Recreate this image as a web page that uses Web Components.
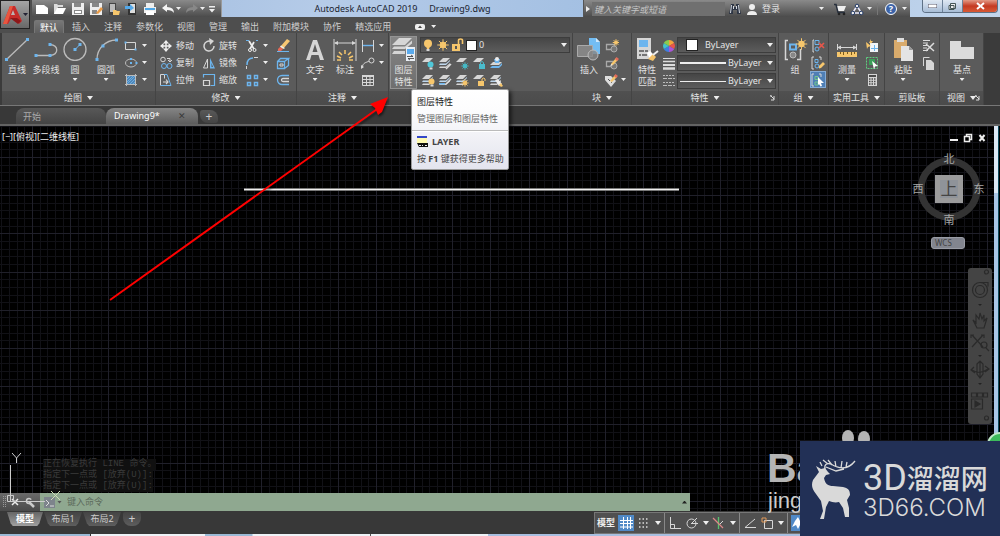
<!DOCTYPE html>
<html lang="zh-CN">
<head>
<meta charset="utf-8">
<title>Autodesk AutoCAD 2019 - Drawing9.dwg</title>
<style>
html,body{margin:0;height:100%}
body{background:#383838;font:9px/12px "Noto Sans","Noto Sans CJK SC",sans-serif;color:#e2e2e2;overflow:hidden}
</style>
</head>
<body>
<cad-app></cad-app>
<script>
const W='#d6d6d6',B='#6db5ee',Y='#f6c66c',G='#a9a9a9';
const dot=(x,y,s=3)=>`<rect x="${x-s/2}" y="${y-s/2}" width="${s}" height="${s}" fill="${B}"/>`;
const st=(d,c=W,w=1)=>`<path d="${d}" fill="none" stroke="${c}" stroke-width="${w}"/>`;
const fl=(d,c=W)=>`<path d="${d}" fill="${c}"/>`;
const stack=fl('M1 6L5 2h7L8 6z')+fl('M1 9l1-1.500h6L12 4v1L8 9z','#bfd8ee')+fl('M1 12l1-1.500h6L12 7v1.500L8 12z');
const sheet=fl('M1 6L5 2h7L8 6z');
const sun=(x,y,r,c=Y)=>{let d='';for(let i=0;i<8;i++){const a=i*Math.PI/4;d+=`M${x} ${y}L${x+Math.cos(a)*r*1.8} ${y+Math.sin(a)*r*1.8}`}return st(d,c,1)+`<circle cx="${x}" cy="${y}" r="${r}" fill="${c}"/>`};
const bulb=(x,y,c=Y)=>`<circle cx="${x}" cy="${y}" r="3" fill="${c}"/>`+fl(`M${x-1} ${y+3}h3v2h-3z`);
const block=st('M1.500 5.500h8v5h-8z',G,1.300)+`<circle cx="9" cy="10" r="3" fill="#777" stroke="${G}"/>`;
const pencil=fl('M6 8l5-6 2 2-5 5-2 .500z',Y)+fl('M6 8l-.500 2 2.500-1z','#e8e8e8')+fl('M10 3l1.500-2L14 3l-2 2z','#e36b5b');
const ICONS={
 line:[24,24,st('M1.500 22.500L22.500 2.500','#bbb',1.300)+dot(1.500,22.500)+dot(22.500,2.500)],
 pline:[24,24,st('M2 18.500h14c9-1 9-10 0-11','#bbb',1.300)+dot(2,18.500)+dot(16,18.500)+dot(16,7.500)],
 circle:[24,24,`<circle cx="12" cy="12.500" r="11" fill="none" stroke="#bbb" stroke-width="1.300"/>`+st('M12 12.500L17 7.500',B)+dot(12,12.500)+dot(17,7.500)],
 arc:[24,24,st('M3 22.500C3 12 11 3 22.500 3','#bbb',1.300)+dot(3,22.500)+dot(9,9)+dot(22.500,3)],
 rect:[16,16,st('M2.500 4.500h10v7h-10z')+dot(2.500,4.500,2)+dot(12.500,11.500,2)],
 ellipse:[16,16,`<ellipse cx="8" cy="8" rx="5.500" ry="4" fill="none" stroke="#bbb"/>`+dot(8,8,2)+dot(13.500,8,2)+dot(8,4,2)],
 hatch:[16,16,fl('M4 4h8v8H4z','#4f87b8')+st('M4 7l3-3M4 10l6-6M4 12l8-8M7 12l5-5M10 12l2-2','#79bdf3',.700)+st('M3.500 2v12M12.500 2v12M2 3.500h12M2 12.500h12','#bbb')],
 move:[16,16,st('M8 3v10M3 8h10','#eee',1.500)+fl('M8 2l3 3.500H5zM8 14l3-3.500H5zM2 8l3.500-3v6zM14 8l-3.500-3v6z','#eee')],
 copy:[16,16,`<circle cx="5" cy="4.500" r="2.300" fill="none" stroke="${W}"/><circle cx="6" cy="11" r="2.500" fill="none" stroke="${B}"/><circle cx="11.500" cy="11" r="2.500" fill="none" stroke="${B}"/>`+st('M9 3.500h3v3M10 5l2 2 2-2')],
 stretch:[16,16,st('M2.500 13.500v-11h4v4',W)+st('M6 2.500h3l4 11H2.500',B)+st('M5 10h5M8 7.500l2 2.500-2 2',W,1.200)],
 rotate:[16,16,st('M10 3.500A5 5 0 1 0 13 8',W,1.500)+fl('M8 0l5 3-4 4z')],
 mirror:[16,16,st('M6.500 4v9H2.500z',W)+fl('M9 3l5 10.500H9z',B)+fl('M10.500 8l1.500 4h-1.500z','#555')],
 scale:[16,16,st('M2.500 5.500v-3h11v11h-4',B,1.200)+st('M2.500 8.500h6v5h-6z',W,1.200)],
 trim:[16,16,st('M2 2.500h3M12 2.500h2',B)+st('M5 3l5 8M10 4L6 11','#eee',1.700)+`<circle cx="6" cy="12" r="1.500" fill="none" stroke="#eee"/><circle cx="10.500" cy="12" r="1.500" fill="none" stroke="#eee"/>`],
 fillet:[16,16,st('M3 10Q3 3 9 3',B,1.500)+st('M10 2.500h4M2.500 11v3')],
 array:[16,16,st('M3.500 3.500h3v3h-3zM10.500 3.500h3v3h-3zM3.500 10.500h3v3h-3z',B,1.500)+st('M10.500 10.500h3v3h-3z',B,1.500)],
 erase:[16,16,fl('M5 9l7-8 3 2-7 8z','#f7c873')+fl('M5 9l3 2-2 2H3v-2z','#e96855')+fl('M5 8.500l4 2.500.800-1L6 7.500z','#eee')+st('M2 13.500h12',B)],
 explode:[16,16,st('M2.500 6.500h7v7h-7zM2.500 6.500l3-3h8l-4 3M9.500 13.500l4-3v-7',B,1.300)+st('M5 9h3v2H5z',W)],
 offset:[16,16,st('M14 3.500H7a4.500 4.500 0 0 0 0 9h7',B,1.300)+st('M14 6.500H8a1.500 1.500 0 0 0 0 3h6',W,1.300)],
 text:[24,24,fl('M3 23L10 3h4l7 20h-4l-1.500-5H8.500L7 23zM9.500 15h5L12 7z')],
 dim:[24,24,st('M1 2v22M23 2v22M2 6h20',W)+fl('M1 6l4-2v4zM23 6l-4-2v4z')+st('M12 13v4M6 15l3 3M18 15l-3 3M4 19l4 2M20 19l-4 2M4 23h4M16 23h4',Y,1.500)],
 lin:[16,16,st('M2.500 2v12M13.500 2v12')+st('M3 7.500h10',B,1.400)],
 leader:[16,16,st('M2 13C3 7 6 8 9 6')+`<circle cx="11.500" cy="5.500" r="2.500" fill="none" stroke="${W}"/>`+fl('M1 14v-4l3 2z')],
 table:[16,16,st('M2.500 3.500h11v10h-11zM2.500 7.500h11M2.500 10.500h11M6.500 4v9M10 4v9')+fl('M2 3h12v2H2z')],
 layers:[26,26,fl('M1 8L8 1h13l-7 7z')+fl('M1 12l2-2.500h11l7-6v3L14 12z')+fl('M1 17l2-3h11v3z')+fl('M15 10h9v14h-9z','#e9eef4')+fl('M16 12h7v5h-7z','#5aabee')+st('M16 19.500h6M20 18l2 1.500M17 21.500h6M19 23l-2-1.500','#333',.800)],
 bulb:[16,16,`<circle cx="8" cy="6.500" r="4" fill="${Y}"/>`+fl('M6 9h4l-1 3H7z',Y)+fl('M6.500 12h3v2h-3z')],
 sun:[16,16,sun(8,8,3.200)],
 unlock:[16,16,fl('M2 7h8v7H2z',Y)+st('M8.500 7V3.500q0-1.500 2-1.500t2 1.500V7',Y,1.600)+fl('M5 9h2v3H5z','#555')],
 l1:[14,14,sheet+bulb(9.500,8.500,'#4fc7d8')], l2:[14,14,stack+st('M8 13l5-5','#ddd',1.500)],
 l3:[14,14,sheet+sun(10,10,2,'#45bcc8')], l4:[14,14,sheet+fl('M7 8h6v5H7z','#4bbccd')+st('M8.500 8V6.500q1.500-2 3 0V8','#4bbccd')],
 l5:[14,14,fl('M1 9l3-3h9l-3 3z')+fl('M1 12l2-2h7l3-3v2l-3 3z',B)+fl('M5 3h6l-1 4H6z',B)+`<circle cx="8" cy="3" r="2" fill="#eee"/>`],
 l6:[14,14,stack+bulb(10.500,8.500)], l7:[14,14,stack+st('M8 11l5-5','#ddd',1.500)+fl('M1 10h6v1.500H1z',B)],
 l8:[14,14,stack+sun(10,10,2)], l9:[14,14,sheet+fl('M6 8h6v5H6z',Y)+st('M10 8V6q2-2 3 0v2',Y)],
 l10:[14,14,stack+fl('M6 7l3-1 4 5-3 2z','#eee')+fl('M10 12l2-2 2 3-2 1z',Y)],
 insert:[26,24,fl('M13 1h7l4 4v12H13z','#73bdf3')+fl('M20 1l4 4h-4z','#cfe8fb')+`<path d="M1.500 8.500h15v11h-15z" fill="#858585" stroke="#aaa"/><circle cx="17" cy="18" r="5" fill="#868686" fill-opacity=".8" stroke="#bbb"/>`],
 b1:[14,14,block+sun(11,3.500,1.800)], b2:[14,14,block+pencil], b3:[14,14,fl('M1 3h6l5 5-5 6-6-7z','#ddd')+st('M4 6l4 4','#555')+pencil],
 match:[26,26,fl('M3 1h14v21H3z')+fl('M5 3h9v7H5z','#6db5ee')+st('M5 14h5M11 14h3M5 18h2M8 18h5','#555',1.500)+fl('M13 16l3-2 4 4-4 4z','#fff')+fl('M14 22l5-5 3 3-3 4z','#f3c26a')+st('M19 18l5-4','#eee',2)],
 wheel:[14,14,'<path d="M7 7V1a6 6 0 0 1 5.200 3z" fill="#f3a33c"/><path d="M7 7l5.200-3a6 6 0 0 1 0 6z" fill="#e8554b"/><path d="M7 7l5.200 3A6 6 0 0 1 7 13z" fill="#a855d8"/><path d="M7 7v6a6 6 0 0 1-5.200-3z" fill="#3f7ee0"/><path d="M7 7l-5.200 3a6 6 0 0 1 0-6z" fill="#42c3c9"/><path d="M7 7L1.800 4A6 6 0 0 1 7 1z" fill="#8acb4f"/>'],
 lw:[14,14,st('M1 2.500h12','#ddd')+st('M1 5.500h12','#ddd',1.500)+st('M1 9h12','#ddd',2)+st('M1 12.500h12','#ddd',2.500)],
 lt:[14,14,'<path d="M1 2.500h12M1 9.500h12" stroke="#bbb" stroke-dasharray="2 1"/><path d="M1 5.500h12M1 12.500h12" stroke="#bbb" stroke-dasharray="4 1"/>'],
 group:[26,24,st('M6 3.500H3.500v19H6M15 22.500h3.500V12',W,1.500)+st('M8 7.500h6v5H8z',B,2)+`<circle cx="11" cy="18" r="3" fill="#888" stroke="#bbb"/>`+sun(19.500,7,3.200)],
 g1:[14,14,st('M4 1.500h4v4H4z',B)+`<circle cx="6" cy="10" r="2" fill="none" stroke="${B}"/>`+st('M3 1H2v12h1',W)+st('M8 4l5 5M13 4L8 9','#e7574b',1.700)],
 g2:[14,14,st('M3 1H1v12h2M8 1h2v3',W)+st('M4 3.500h3v3H4z',B)+`<circle cx="6" cy="10" r="2" fill="none" stroke="${B}"/>`+fl('M8 10l4-4 2 2-4 4-2 .500z',Y)],
 g3:[14,14,st('M3 1H1v12h2M8 1h2v3',W)+st('M4 3.500h3v3H4zM4 9h3v3H4z','#72c78d')+fl('M7 4l6 6H10l1 3-1.500.500L8 11l-1 1z','#fff')],
 measure:[24,24,st('M2.500 7v6M21.500 7v6M3 10.500h18')+fl('M2 10.500l4-2v4zM22 10.500l-4-2v4z')+fl('M2 15h20v5H2z',Y)+st('M5.500 15v2M8.500 15v3M12.500 15v2M16.500 15v3M19.500 15v2','#7b5a1b')],
 u1:[14,14,fl('M5 4h8v9H5z','#f1f5f9')+st('M9.500 6v6M6 9.500h7',B)+fl('M1 3l5 4-3 1-1 2zM6 0L4 4h2L5 6l3-4H6z',Y)],
 u2:[14,14,'<path d="M1.500 1.500h11v11h-11z" fill="none" stroke="#5fce7f" stroke-dasharray="2 1"/>'+fl('M4 3h6v6H4z','#3c9f5a')+fl('M7 5l6 5-3 .500-1 3z','#fff')],
 calc:[14,14,fl('M3 1h9v12H3z')+fl('M4 2h7v2H4z','#4a4a4a')+'<path d="M4 6h7M4 8.500h7M4 11h7" stroke="#4a4a4a" stroke-width="1.500" stroke-dasharray="1.500 1"/>'],
 paste:[24,24,fl('M3 3h13v18H3z','#d9ab6c')+fl('M6 1h7v4H6z','#ddd')+fl('M10 9h8l4 4v11H10z','#e4e4e4')+fl('M18 9l4 4h-4z','#999')],
 cut:[14,14,st('M2 1.500h7M2 4h5M2 6.500h4M2 9h4M2 11.500h5','#ddd')+st('M5 5l8 7M13 4l-8 8','#ddd',1.500)],
 copyclip:[14,14,st('M2.500 10V1.500h6')+fl('M5 4h5l3 3v7H5z')],
 base:[24,24,fl('M0 4h11v6h13v12H0z','#dcdcdc')],
 new:[14,14,fl('M1 3h8l4 3v6H1z','#fff')], open:[14,14,fl('M1 2h3l1 1h5v2H5l-3 7H1z','#ddd')+fl('M4 6h9l-3 6H1z','#fff')],
 save:[14,14,fl('M1 1h12v12H1z','#eee')+fl('M3 1h7v4H3zM3 8h8v4H3z','#888')+fl('M4 9h6v2H4z','#fff')],
 saveas:[14,14,fl('M1 1h12v12H1z','#eee')+fl('M3 1h7v4H3zM3 8h5v4H3z','#888')+fl('M7 11l5-6 2 2-5 5z','#e99a45')],
 mob:[14,14,fl('M2 1h7v12H2z','#444')+fl('M3 2h5v8H3z','#bbb')+fl('M6 8h3l1 1h3l-1 4H6z',Y)], mob2:[14,14,fl('M3 1h8v12H3z','#333')+fl('M5 2h5v9H5z','#ddd')+fl('M0 4h5V2l4 4-4 3V7H0z','#54a9ea')],
 print:[14,14,fl('M3 1h8v4H3z','#eee')+fl('M1 5h12v6H1z','#eee')+fl('M2 6h10v2H2z','#4ea7e8')+fl('M3 9h8v4H3z','#fff')],
 undo:[14,14,fl('M1 6l5-4v3q7 0 7 6-2-3-7-3v2z','#f4f4f4')], redo:[14,14,fl('M13 6L8 2v3q-7 0-7 6 2-3 7-3v2z','#888')],
 custom:[14,14,fl('M4 4h6v1.500H4zM4 7h6l-3 3.500z','#eee')],
 find:[14,14,fl('M3 2h3v3h2V2h3l2 10H9V8H5v4H1z','#2e3645')+st('M3.500 3l-1 8M5.500 4v3M8.500 4v3M10.500 3l1 8','#d5dae2')], user:[14,14,`<circle cx="7" cy="5" r="3" fill="#eee"/>`+fl('M2 13q0-4 5-4t5 4z','#eee')],
 cart:[14,14,fl('M3 4h10l-2 5H5z','#eee')+st('M1 2.500h2l2 8h7','#28303d',1.500)+'<circle cx="6" cy="12" r="1.300" fill="#222"/><circle cx="11" cy="12" r="1.300" fill="#222"/>'],
 a360:[14,14,st('M7 4L2.500 11h9z','#eef',1.500)+'<circle cx="7" cy="4" r="1.800" fill="#eee" stroke="#233a66"/><circle cx="2.800" cy="11" r="1.800" fill="#eee" stroke="#233a66"/><circle cx="11.200" cy="11" r="1.800" fill="#eee" stroke="#233a66"/>'],
 logo:[24,22,fl('M1 20L8 2h5l7 15-3 3-2-5H9l-3 5z','#c52c2a')+fl('M8 2h3L5 20H1z','#e9563f')+fl('M9 11h4L11 6z','#bdb3b3')+fl('M8 14h7l4 3-3 3z','#8e1719')],
 pill:[14,14,'<rect x="2" y="4" width="10" height="6" rx="2" fill="#eee"/>'+fl('M5 8l2-2.500L9 8z','#444')],
 gridicon:[14,14,st('M4.500 1v12M8.500 1v12M11.500 1v12M1 4.500h13M1 7.500h13M1 11h13','#fff')],
 dots:[14,14,'<path d="M2 3h9M2 7h9M2 11h9" stroke="#ddd" stroke-width="1.500" stroke-dasharray="1.500 2"/>'],
 ortho:[14,14,st('M2.500 1v11.500H13M2.500 8.500h4v4')], polar:[14,14,`<circle cx="6.500" cy="7.500" r="4.500" fill="none" stroke="${W}"/>`+st('M6 7.500h7M7 7L12 2')],
 iso:[14,14,st('M6.500 1v12','#57c36d',1.300)+st('M1 2l10 10','#d88',1.300)+st('M11 5L8 8')], osnap:[14,14,st('M12 3L2 11.500h11')], sq:[14,14,st('M4.500 4.500h8v8h-8z')+st('M2 2h4v4H2z','#e09a5a')],
 star:[14,14,fl('M6 1l2 4 4 5-4-1-2 4-2-4-4 2 3-6z','#fff')]
};
const html=(s)=>{const t=document.createElement('template');t.innerHTML=s;return t};
function define(name,render,after){
 customElements.define(name,class extends HTMLElement{
  connectedCallback(){ if(this.shadowRoot)return; const r=this.attachShadow({mode:'open'}); r.append(html('<style>*{box-sizing:border-box}button{all:unset;box-sizing:border-box;cursor:default}</style>'+render(this)).content.cloneNode(true)); after&&after(r,this);}
 });
}
define('cad-icon',el=>{const [w,h,s]=ICONS[el.getAttribute('name')];return `<style>:host{display:block;flex:none;width:${w}px;height:${h}px}svg{display:block}</style><svg width="${w}" height="${h}" viewBox="0 0 ${w} ${h}" aria-hidden="true">${s}</svg>`});
define('cad-arrow',()=>`<style>:host{display:block;flex:none;width:5px;height:3px;background:#eee;clip-path:polygon(0 0,100% 0,50% 100%)}</style>`);
define('cad-tool',el=>`<style>:host{display:block;height:17px}button{display:flex;align-items:center;justify-content:flex-start;height:17px;white-space:nowrap;min-width:16px}cad-icon{margin:0 auto}span{margin-left:2px}cad-arrow{margin-left:3px}
:host([on]) button{background:#4f7fb5;box-shadow:inset 0 0 0 1px #84abd6}</style>
<button aria-label="${el.getAttribute('label')||el.getAttribute('icon')}"><cad-icon name="${el.getAttribute('icon')}"></cad-icon>${el.hasAttribute('label')?`<span>${el.getAttribute('label')}</span>`:''}${el.hasAttribute('drop')?'<cad-arrow></cad-arrow>':''}</button>`);
define('cad-big',el=>`<style>:host{display:block;width:30px;flex:none}button{display:flex;flex-direction:column;align-items:center;width:100%;height:53px;padding-top:1px;text-align:center}.ic{height:27px}span{display:block;white-space:nowrap}cad-arrow{margin-top:2px}
:host([on]) button{background:linear-gradient(#868686,#6e6e6e);box-shadow:inset 0 0 0 1px #949494}</style>
<button><div class="ic"><cad-icon name="${el.getAttribute('icon')}"></cad-icon></div><span><slot></slot></span>${el.hasAttribute('drop')?'<cad-arrow></cad-arrow>':''}</button>`);
define('cad-panel',el=>`<style>:host{display:flex;flex-direction:column;flex:none;position:relative;height:72px;border-right:1px solid #444;background:#5b5b5b}
.body{flex:1;display:flex;padding:3px 0 0 1px}.cap{height:14px;background:linear-gradient(#505050,#4b4b4b);display:flex;align-items:center;justify-content:center;gap:5px;position:relative}
cad-arrow{width:6px;height:4px}.l{position:absolute;right:3px;top:4px}</style>
<div class="body"><slot></slot></div><div class="cap"><span>${el.getAttribute('caption')}</span>${el.hasAttribute('plain')?'':'<cad-arrow></cad-arrow>'}${el.hasAttribute('launch')?'<svg class="l" width="5" height="6" aria-hidden="true"><path d="M0 0h2M0 0v2M1 1l3 3M4 1v4H1" stroke="#ddd" fill="none"/></svg>':''}</div>`);
define('cad-combo',el=>`<style>:host{display:flex;align-items:center;height:16px;position:relative;background:linear-gradient(#464646,#5c5c5c);border:1px solid #3d3d3d;min-width:0}
select{appearance:none;flex:1;min-width:0;height:14px;border:0;padding:0 0 0 2px;margin:0;background:none;color:#e6e6e6;font:inherit;line-height:12px;outline:0}cad-arrow{margin-right:2px;width:6px;height:4px}</style>
<slot></slot><select aria-label="${el.getAttribute('label')}"><option>${el.getAttribute('value')}</option></select><cad-arrow></cad-arrow>`);
define('cad-tooltip',()=>`<style>:host{display:block;width:98px;height:81px;background:linear-gradient(#fff 0,#fcfcfd 20px,#f4f4f8 40px,#e3e4ee);border:1px solid #999;border-radius:2px;box-shadow:2px 2px 4px #000a;color:#666;white-space:nowrap}
p{margin:0;padding:0 0 0 5px;line-height:17px}.name{color:#222;padding-top:3px}hr{margin:3px 0 1px;border:0;border-top:1px solid #bbb;border-bottom:1px solid #fff}
.c{display:flex;align-items:center;gap:4px}b{color:#444}.h{color:#444}</style>
<p class="name">图层特性</p><p>管理图层和图层特性</p><hr><p class="c"><svg width="11" height="12" aria-hidden="true"><path d="M0 0h10v8H0z" fill="#fffbb0"/><path d="M0 0h10v2H0z" fill="#3448c8"/><path d="M0 7h11v4H2z" fill="#111"/><path d="M2 9.500h2M5 9.500h1M8 9.500h2" stroke="#eee"/></svg><b>LAYER</b></p><p class="h">按 <b>F1</b> 键获得更多帮助</p>`);
define('cad-titlebar',()=>`<style>:host{display:flex;height:17px;background:linear-gradient(100deg,#9bb8dc,#b5cbe8 30%,#a2bfe2 60%,#c3d6ec)}
.g{background:linear-gradient(#8a8a8a,#4b4b4b);display:flex;align-items:center}.q{width:190px;padding-left:3px;gap:4px;border-right:1px solid #999;flex:none}.q cad-arrow{margin:0 0 0 -3px}
h1{margin:0;font:inherit;color:#1c2430;flex:1;text-align:center;line-height:18px;white-space:pre}
.t{width:9px;justify-content:center;border-left:1px solid #555}.t i{border:3px solid transparent;border-left:4px solid #eee;border-right:0}
.s{width:318px;gap:3px;padding-right:3px}input{width:133px;height:14px;border:0;margin:1px 0 0;padding:0 2px;background:#707070;font:italic 9px/12px "Noto Sans","Noto Sans CJK SC",sans-serif;color:#ddd;border-radius:0}input::placeholder{color:#c4c4c4}
.login{display:flex;align-items:center;flex:1;justify-content:space-between;margin-right:6px}.sep{width:1px;height:12px;background:#777;margin:0 2px}
.help{width:12px;height:12px;border-radius:50%;border:1px solid #fff;background:#3d64a8;color:#fff;font-weight:bold;line-height:10px;text-align:center;margin:0 2px}
.w{width:90px;display:flex;justify-content:flex-end;padding-right:2px}.w div{display:flex;height:13px;border:1px solid #5e7186;border-top:0;border-radius:0 0 4px 4px;overflow:hidden}.w button{width:20px;height:12px;display:grid;place-items:center;background:linear-gradient(#dfe8f3,#a8bdd6);border-right:1px solid #6d8198}.w .x{width:34px;background:linear-gradient(#e39a86,#c43a22 50%,#d85a36);border:0}</style>
<div class="g q">${['new','open','save','saveas','mob','mob2','print','undo'].map(n=>`<cad-icon name="${n}"></cad-icon>`).join('')}<cad-arrow></cad-arrow><cad-icon name="redo"></cad-icon><cad-arrow></cad-arrow><cad-icon name="custom" style="margin-left:-4px"></cad-icon></div>
<h1>Autodesk AutoCAD 2019     Drawing9.dwg</h1>
<div class="g t"><i></i></div><div class="g s"><input aria-label="搜索" placeholder="键入关键字或短语"><cad-icon name="find"></cad-icon><cad-icon name="user"></cad-icon><div class="login"><span>登录</span><cad-arrow></cad-arrow></div><cad-icon name="cart"></cad-icon><cad-icon name="a360"></cad-icon><cad-arrow></cad-arrow><span class="sep"></span><span class="help">?</span><cad-arrow></cad-arrow></div>
<div class="w"><div><button aria-label="最小化"><svg width="9" height="4"><path d="M0 0h9v4H0z" fill="#fff" stroke="#556"/></svg></button><button aria-label="还原"><svg width="9" height="9"><path d="M2.500 1.500h5v5h-5zM1 3.500h5v4H1z" fill="#eee" stroke="#455"/></svg></button><button class="x" aria-label="关闭"><svg width="9" height="8"><path d="M1 1l7 6M8 1L1 7" stroke="#fff" stroke-width="2"/></svg></button></div></div>`);
define('cad-tabs',()=>`<style>:host{display:flex;align-items:flex-end;height:16px;background:#4e4e4e;padding-left:2px}nav{display:flex;gap:14px;align-items:end}
button{height:13px;line-height:13px;color:#cfcfcf;white-space:nowrap}.on{width:30px;text-align:center;background:linear-gradient(#777,#5f5f5f);color:#fff;border:1px solid #777;border-bottom:0;border-radius:2px 2px 0 0;margin-right:-6px}.p{display:flex;align-items:center;gap:4px;margin-left:22px}</style>
<nav><button class="on">默认</button>${['插入','注释','参数化','视图','管理','输出','附加模块','协作','精选应用'].map(n=>`<button>${n}</button>`).join('')}</nav><button class="p" aria-label="最小化功能区"><cad-icon name="pill"></cad-icon><cad-arrow></cad-arrow></button>`);
const tools=(...a)=>a.map(s=>{const [i,l,d]=s.split('|');return `<cad-tool icon="${i}"${l?` label="${l}"`:''}${d?' drop':''}></cad-tool>`}).join('');
define('cad-ribbon',()=>`<style>:host{display:flex;height:73px;background:#3b3b3b;padding-left:2px;border-bottom:1px solid #777}.col{padding-top:1px;flex:none}
.mod{display:flex;gap:7px;padding-left:1px}.lay{flex:1;margin:1px 2px 0 3px}.lay .r{display:flex}.lay cad-tool{width:17px}.lay cad-combo{margin-bottom:1px}.lay cad-combo cad-icon{margin-left:-1px}
.props{flex:1;display:grid;grid-template-rows:repeat(3,17px);row-gap:1px;margin:1px 2px 0 0}.props cad-combo{height:16px}.sw{display:block;width:11px;height:11px;background:#fff;border:1px solid #222;margin:0}.big{width:12px;height:12px;margin:0 5px 0 8px}.ln{display:block;width:46px;margin:0 0 0 2px;border-top:1px solid #eee}.ln.b{border-top-width:2px}
cad-tooltip{position:absolute;left:22px;top:56px;z-index:5}</style>
<cad-panel caption="绘图" style="width:154px"><cad-big icon="line" style="width:28px">直线</cad-big><cad-big icon="pline">多段线</cad-big><cad-big icon="circle" drop style="width:28px">圆</cad-big><cad-big icon="arc" drop style="width:34px">圆弧</cad-big><div class="col">${tools('rect||1','ellipse||1','hatch||1')}</div></cad-panel>
<cad-panel caption="修改" style="width:141px"><div class="mod"><div class="col">${tools('move|移动','copy|复制','stretch|拉伸')}</div><div class="col">${tools('rotate|旋转','mirror|镜像','scale|缩放')}</div><div class="col">${tools('trim||1','fillet||1','array||1')}</div><div class="col">${tools('erase','explode','offset')}</div></div></cad-panel>
<cad-panel caption="注释" style="width:92px"><cad-big icon="text" drop style="margin-left:2px">文字</cad-big><cad-big icon="dim">标注</cad-big><div class="col">${tools('lin||1','leader||1','table')}</div></cad-panel>
<cad-panel caption="" plain style="width:184px;z-index:4"><cad-big icon="layers" on style="width:27px">图层<br>特性</cad-big><div class="lay"><cad-combo label="图层" value="0"><cad-icon name="bulb"></cad-icon><cad-icon name="sun"></cad-icon><cad-icon name="unlock"></cad-icon><span class="sw"></span></cad-combo><div class="r">${tools('l1','l2','l3','l4','l5')}</div><div class="r">${tools('l6','l7','l8','l9','l10')}</div></div><cad-tooltip></cad-tooltip></cad-panel>
<cad-panel caption="块" style="width:59px"><cad-big icon="insert">插入</cad-big><div class="col">${tools('b1','b2','b3||1')}</div></cad-panel>
<cad-panel caption="特性" launch style="width:147px"><cad-big icon="match" style="width:28px">特性<br>匹配</cad-big><div class="col">${tools('wheel','lw','lt')}</div><div class="props"><cad-combo label="颜色" value="ByLayer"><span class="sw big"></span></cad-combo><cad-combo label="线宽" value="ByLayer"><span class="ln b"></span></cad-combo><cad-combo label="线型" value="ByLayer"><span class="ln"></span></cad-combo></div></cad-panel>
<cad-panel caption="组" style="width:50px"><cad-big icon="group">组</cad-big><div class="col">${tools('g1','g2')}<cad-tool icon="g3" on></cad-tool></div></cad-panel>
<cad-panel caption="实用工具" style="width:56px"><cad-big icon="measure" drop style="margin-left:2px">测量</cad-big><div class="col" style="margin-left:2px">${tools('u1','u2','calc')}</div></cad-panel>
<cad-panel caption="剪贴板" plain style="width:55px"><cad-big icon="paste" drop style="width:34px">粘贴</cad-big><div class="col">${tools('cut','copyclip')}</div></cad-panel>
<cad-panel caption="视图" launch style="width:44px"><cad-big icon="base" drop style="width:42px">基点</cad-big></cad-panel>`);
define('cad-files',()=>`<style>:host{display:flex;align-items:flex-end;height:20px;background:#383838;border-bottom:2px solid #636363;padding-left:16px}
button{height:16px;line-height:15px;padding-left:7px;border-radius:8px 8px 0 0;background:linear-gradient(#585858,#444);color:#aaa;width:90px}.on{width:92px;padding-left:8px;background:linear-gradient(#858585,#5c5c5c);color:#fff;display:flex;justify-content:space-between;padding-right:12px}.n{width:18px;height:13px;line-height:13px;margin:0 0 1px 2px;padding:0;text-align:center;font-size:12px;border-radius:3px 8px 3px 8px;color:#ccc}small{font-size:9px;color:#3a3a3a}</style>
<button>开始</button><button class="on">Drawing9*<small>✕</small></button><button class="n" aria-label="新图形">+</button>`);
define('cad-compass',()=>`<style>:host{display:block;width:76px;height:76px;color:#aaa}text{font:11px "Noto Sans CJK SC",sans-serif;fill:#a6a6a6;text-anchor:middle}.u{font-size:17px;fill:#444}</style>
<svg width="76" height="76"><circle cx="38" cy="38" r="28" fill="none" stroke="#333" stroke-width="7"/><path d="M24 24h28v28H24z" fill="#9b9b9b"/><path d="M29 29h18v18H29z" fill="#8f9399"/><text x="38" y="12">北</text><text x="38" y="73">南</text><text x="7" y="42">西</text><text x="68" y="42">东</text><text class="u" x="38" y="44">上</text></svg>`);
define('cad-nav',()=>`<style>:host{display:block;width:24px;height:156px;border-radius:3px;background:#444}</style>
<svg width="24" height="156" fill="none" stroke="#2a2a2a" stroke-width="1.200"><circle cx="18.500" cy="4" r="2"/><circle cx="18.500" cy="150" r="2"/><circle cx="12" cy="22" r="4.500"/><circle cx="12" cy="22" r="7.500"/><path d="M12 14.500h8v4"/><path d="M5 52l4 8h7l3-10-3 3 0-6-2 4-2-6-1 6-3-4v8z"/><path d="M4 67l11 12M15 67L4 79M3 70v-3h3M13 67h3v3"/><circle cx="16" cy="77" r="3"/><path d="M18 80l3 3M12 93v17M9 96l3-3 3 3v10l-3 4-3-4zM4 102q8 5 16-1M6 99l-3 3 4 3M17 98l4 3-4 3M3.500 125h5v4h-5zM9.500 125h5v4h-5zM15.500 125h4v4h-4zM3.500 131h11v10h-11z"/><path d="M7 133l5 3-5 3z" fill="#2a2a2a"/><path d="M10 36h4l-2 2zM10 87h4l-2 2zM10 115h4l-2 2z" fill="#222" stroke="none"/></svg>`);
define('cad-grid',()=>`<style>:host{display:block;position:absolute;inset:0;overflow:hidden}svg{display:block;width:100%;height:100%}</style><svg aria-hidden="true"><path class="a" stroke="#111116" fill="none"/><path class="b" stroke="#20202a" fill="none"/></svg>`,r=>{
 const draw=()=>{let a='',b='';const n=Math.ceil(Math.max(innerWidth,innerHeight)/7);for(let k=-5;k<n;k++){const x=Math.round(32+k*7.64)+.5,y=Math.round(31+k*7.64)+.5,s=`M${x} 0V4000M0 ${y}H6000`;k%5?a+=s:b+=s}r.querySelector('.a').setAttribute('d',a);r.querySelector('.b').setAttribute('d',b)};draw();addEventListener('resize',draw)});
define('cad-drawing',()=>`<style>:host{display:flex;flex-direction:column;justify-content:flex-end;flex:1;position:relative;background:#000;min-height:0;overflow:hidden}
.view{position:absolute;left:2px;top:5px;line-height:12px;color:#eee}.seg{position:absolute;left:244px;top:62px;width:435px;height:3px;background:linear-gradient(#777 1px,#eee 1px 2px,#777 2px)}
.wc{position:absolute;right:13px;top:7px}cad-compass{position:absolute;right:13px;top:25px}.wcs{position:absolute;right:35px;top:111px;width:34px;height:12px;border-radius:3px;background:#82858f;border:1px solid #9a9da6;color:#444;font-size:8px;line-height:10px;padding-left:3px}
cad-nav{position:absolute;right:8px;top:142px}.edge{position:absolute;right:0;top:0;bottom:0;width:6px;background:linear-gradient(90deg,#a9c6e6 4px,#0c4a5c 4px 5px,#000 5px)}.edge i{display:block;width:4px;height:67px;background:#dbe8f5}
.ball{position:absolute;right:-13px;top:306px;width:26px;height:26px;border-radius:50%;background:#3dbb5c;border:2px solid #bfe8c8}
.ucs{position:absolute;left:0;bottom:0;z-index:2}.hist{position:relative;margin:0 0 1px 43px;font:9px/12px "Liberation Mono","Noto Sans CJK SC",monospace;color:#3a3a3a}.hist span{display:table;background:#101010;white-space:pre;height:11px;line-height:11px}
.cmd{position:relative;display:flex;height:18px;width:69%;background:#8fa890;align-items:center}.h{width:40px;height:18px;background:linear-gradient(#6a6a6a,#4a4a4a)}input{flex:1;border:0;background:none;font:9px/12px "Noto Sans CJK SC",sans-serif;color:#333;padding:0 0 0 5px;outline:0}input::placeholder{color:#5c6b5c}.up{width:5px;height:3px;background:#222;clip-path:polygon(50% 0,100% 100%,0 100%);margin-right:3px}.pr{margin-left:4px}.cmd cad-arrow{background:#555;margin:0 0 0 2px}</style>
<cad-grid></cad-grid><div class="view">[−][俯视][二维线框]</div><div class="seg"></div>
<svg class="wc" width="38" height="12" fill="none" stroke="#eee" stroke-width="1.500"><path d="M1 7h8" stroke-width="2"/><path d="M17.500 3V1.500h5v5H21M15.500 3.500h5v5h-5z"/><path d="M30.500 2l5 6M35.500 2l-5 6" stroke-width="2"/></svg>
<cad-compass></cad-compass><div class="wcs">WCS</div><cad-nav></cad-nav><div class="edge"><i></i></div><div class="ball"></div>
<div class="hist"><span>正在恢复执行 LINE 命令。</span><span>指定下一点或 [放弃(U)]:</span><span>指定下一点或 [放弃(U)]:</span></div>
<div class="cmd"><div class="h"><svg width="40" height="18"><path d="M3.500 3v12M5.500 3v12" stroke="#999" stroke-dasharray="1 1"/><path d="M12 6l6 6M18 6l-6 6" stroke="#eee" stroke-width="1.500"/><path d="M29 9l5 5" stroke="#ccc" stroke-width="2.500"/><circle cx="29" cy="8" r="2.500" fill="none" stroke="#ccc" stroke-width="1.500" stroke-dasharray="12 4" stroke-dashoffset="-2"/></svg></div><svg class="pr" width="11" height="11"><path d="M0 0h11v11H0z" fill="#7d848c"/><path d="M2 3l3 3-3 3M6 9h4" stroke="#ddd" fill="none"/></svg><cad-arrow></cad-arrow><input aria-label="命令行" placeholder="键入命令"><div class="up"></div></div>
<svg class="ucs" width="66" height="62" fill="none" stroke="#ccc" aria-hidden="true"><path d="M10.500 16v36M7.500 46.500h6v6h-6zM12 52.500h33M12 4l4.500 5L21 4M16.500 9v5"/><path d="M51 42l9 9M60 42l-9 9" stroke="#cfe0b8"/></svg>`);
define('cad-footer',()=>`<style>:host{display:flex;justify-content:space-between;height:23px;background:#383838;flex:none}
.t{display:flex;padding:1px 0 0 7px;gap:1px}.t button{height:14px;line-height:14px;width:38px;text-align:center;background:linear-gradient(#444,#5d5d5d);color:#ccc;clip-path:polygon(0 0,100% 0,90% 80%,84% 100%,16% 100%,10% 80%)}.t .on{background:linear-gradient(#666,#a0a0a0);color:#fff;font-weight:bold;width:36px}.t .n{width:18px;font-size:12px;clip-path:none;border-radius:2px 2px 8px 8px;margin-left:1px}
.s{display:flex;align-items:center;height:22px;width:406px;margin-top:1px;background:#505050;border:1px solid #777;padding-left:2px;flex:none;gap:3px;overflow:hidden}.s>*{flex:none}.s b{font-weight:bold;color:#eee}.g{background:#5089c6;width:16px;height:16px;display:grid;place-items:center}.s cad-arrow{margin-left:1px;width:6px;height:4px}.v{width:1px;height:20px;background:#888}</style>
<div class="t"><button class="on">模型</button><button>布局1</button><button>布局2</button><button class="n" aria-label="新建布局">+</button></div>
<div class="s"><b>模型</b><button class="g" aria-label="栅格"><cad-icon name="gridicon"></cad-icon></button><cad-icon name="dots"></cad-icon><cad-arrow></cad-arrow><i class="v"></i><cad-icon name="ortho"></cad-icon><cad-icon name="polar"></cad-icon><cad-arrow></cad-arrow><cad-icon name="iso"></cad-icon><cad-arrow></cad-arrow><i class="v"></i><cad-icon name="osnap"></cad-icon><cad-icon name="sq"></cad-icon><cad-arrow></cad-arrow><i class="v"></i><button class="g" aria-label="注释可见性"><cad-icon name="star"></cad-icon></button></div>`);
define('cad-watermark',()=>`<style>:host{display:block;position:absolute;right:0;bottom:0;width:232px;height:110px;z-index:8;color:#b4b4b4;overflow:hidden}
.ba{position:absolute;left:-1px;top:22px;font:bold 41px/41px "Liberation Sans",sans-serif}.ji{position:absolute;left:0;top:62px;font:22px/26px "Liberation Sans",sans-serif;color:#ccc}.paw{position:absolute;left:72px;top:4px}
.box{position:absolute;right:0;bottom:0;width:200px;height:95px;background:#223056;color:#d9d9d9}.deer{position:absolute;left:12px;top:18px}.tx{position:absolute;left:63px;top:20px;white-space:nowrap}.a{display:flex;align-items:center;height:34px;font:36px/34px Roboto,"Liberation Sans",sans-serif}.a span{font:500 27px/34px "Noto Sans CJK SC",sans-serif}.b{font:300 24px/26px Inter,sans-serif}</style>
<div class="ba">Ba</div><div class="ji">jing</div><svg class="paw" width="32" height="20"><ellipse cx="8" cy="8" rx="6" ry="8" fill="#b4b4b4"/><ellipse cx="24" cy="9" rx="6" ry="8" fill="#b4b4b4"/></svg>
<div class="box"><svg class="deer" width="46" height="60" viewBox="0 0 46 60"><path d="M4 7l5 3 4-1 3 4 2 2-4 1-2 3c1 6 4 8 9 8l10 1c5 1 7 3 7 8l-3 5 2 8v9h-4l-2-9-4-6c-4 1-7 0-10-1l-3 6-2 12H8l3-8-2-10-5-7c-4-5-5-9-3-14l6-8z" fill="#d9d9d9"/><path d="M13 10c-1-5 2-6 6-5 8 5 17 6 24-3M16 5l-5-4M20 6l-4-5M24 8l-1-6M29 9l1-7M34 8l1-5M14 8l10 4 8-2M10 7L8 3" fill="none" stroke="#d9d9d9" stroke-width="1.300"/></svg>
<div class="tx"><div class="a">3D<span>溜溜网</span></div><div class="b">3D66.COM</div></div></div>`);
define('cad-app',()=>`<style>:host{display:flex;flex-direction:column;height:100vh;position:relative;overflow:hidden}
header{display:grid;grid-template-columns:32px 1fr;grid-template-rows:17px 16px;background:#4e4e4e;flex:none}.app{grid-row:1/3;width:30px;height:29px;background:linear-gradient(#a5a5a5,#686868);border:1px solid #222;display:flex;align-items:center;gap:0;padding-left:1px}.app cad-arrow{background:#223;margin-left:-3px;z-index:1}cad-ribbon,cad-files{flex:none}
.note{position:absolute;left:108px;top:95px;z-index:6;filter:drop-shadow(1px 2px 1px #0008)}
.task{height:2px;flex:none;background:linear-gradient(90deg,#9bbad6 9%,#333 9% 9.1%,#eef3f8 9.1% 20.5%,#9bbad6 20.5% 25.2%,#eef3f8 25.3% 37%,#555 37% 37.1%,#eef3f8 37.1% 48.800%,#a8bfe0 48.800%)}</style>
<header><button class="app" aria-label="应用程序菜单"><cad-icon name="logo"></cad-icon><cad-arrow></cad-arrow></button><cad-titlebar></cad-titlebar><cad-tabs></cad-tabs></header>
<cad-ribbon></cad-ribbon><cad-files></cad-files><cad-drawing></cad-drawing><cad-footer></cad-footer><div class="task"></div>
<svg class="note" width="284" height="210" aria-hidden="true"><path d="M2 205L272 12" stroke="#f00" stroke-width="2"/><path d="M280 2l-18 7 5 4 3 7 4-3z" fill="#f00"/></svg>
<cad-watermark></cad-watermark>`);
</script>
</body>
</html>
